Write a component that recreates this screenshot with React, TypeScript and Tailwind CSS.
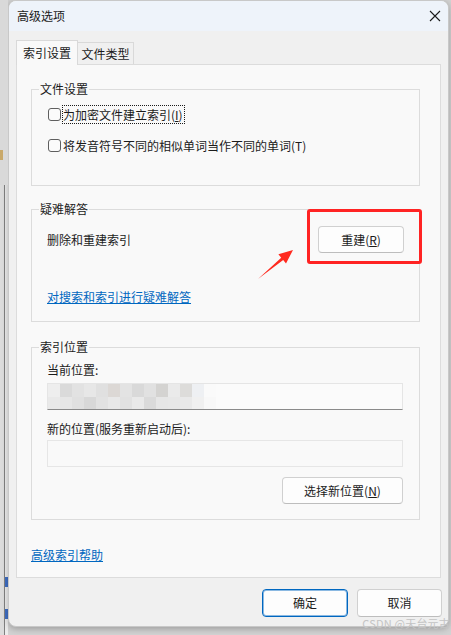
import React from "react";

const font = {
  fontFamily: '"Noto Sans CJK SC", "Noto Sans", "Liberation Sans", sans-serif',
};

const row1 = ["#eeeeee", "#dadada", "#e2e2e2", "#e7e7e7", "#e0e0e0", "#dcd8d5", "#e3e3e3", "#d9d9d9", "#e1e1e1", "#d4d3d1", "#eaeaea", "#dddcda", "#eef0f3", "#fafafa"];
const row2 = ["#e9e9e9", "#e6e6e6", "#e0e0e0", "#d8d8d8", "#e2e2e2", "#e8e8e8", "#e1e1e1", "#e9e9e9", "#dadada", "#e6e6e6", "#e7e7e7", "#e9e9e9", "#f0f0f0", "#f8f8f8"];

function Checkbox() {
  return (
    <span className="w-[13px] h-[13px] rounded-[3px] border border-[#5f5f5f] bg-[#fbfbfb] shrink-0" />
  );
}

function Btn({ children, className = "" }: { children: React.ReactNode; className?: string }) {
  return (
    <div
      className={
        "h-[27px] flex items-center justify-center rounded-[4px] border border-[#d0d0d0] border-b-[#bdbdbd] bg-[#fdfdfd] text-[12px] leading-[16px] text-[#1b1b1b] " +
        className
      }
    >
      {children}
    </div>
  );
}

export default function App() {
  return (
    <div
      className="w-[451px] h-[635px] bg-[#d2d2d2] flex relative overflow-hidden text-[#1b1b1b]"
      style={font}
    >
      {/* background window strip */}
      <div className="w-[8px] h-full flex flex-col shrink-0">
        <div className="h-[185px] bg-[#d9d9d9] relative">
          <span className="absolute left-[0px] top-[150px] w-[3px] h-[10px] bg-[#c9a96b]" />
        </div>
        <div className="flex-1 bg-[#e6e6e6] flex">
          <div className="w-[4px] bg-[#dcdcdc]" />
          <div className="w-[1px] bg-[#808080]" />
          <div className="flex-1 bg-[#ececec] flex flex-col">
            <div className="h-[392px]" />
            <div className="h-[10px] w-[3px] bg-[#3f6fc4]" />
            <div className="h-[22px]" />
            <div className="h-[10px] w-[3px] bg-[#3f6fc4]" />
          </div>
        </div>
      </div>

      {/* dialog */}
      <div className="w-[441px] h-[627px] rounded-[8px] bg-[#f0f0f0] flex flex-col overflow-hidden shadow-[0_2px_6px_rgba(0,0,0,0.25)] border border-[#c8c8c8] shrink-0">
        {/* title bar */}
        <div className="h-[30px] bg-[#eef3fa] flex items-center justify-between pl-[8px] pr-[6px] shrink-0">
          <span className="text-[12px] leading-[16px] text-[#1b1b1b]">高级选项</span>
          <svg width="12" height="12" viewBox="0 0 12 12" className="mr-[1px]">
            <path d="M1 1 L11 11 M11 1 L1 11" stroke="#1b1b1b" strokeWidth="1.1" />
          </svg>
        </div>

        {/* body */}
        <div className="flex flex-col pt-[9px] pl-[7px]">
          {/* tabs */}
          <div className="flex items-end h-[24px]">
            <div className="w-[62px] h-[25px] bg-[#f9f9f9] border border-[#d9d9d9] border-b-0 flex items-center justify-center text-[12px] leading-[16px] relative z-10 -mb-[1px]">
              索引设置
            </div>
            <div className="w-[56px] h-[22px] bg-[#f0f0f0] border border-[#d9d9d9] border-l-0 border-b-0 flex items-center justify-center text-[12px] leading-[16px]">
              文件类型
            </div>
          </div>

          {/* panel */}
          <div className="w-[425px] h-[514px] bg-[#f9f9f9] border border-[#dcdcdc] flex flex-col pl-[14px] pt-[16px]">
            {/* 文件设置 */}
            <fieldset className="w-[389px] h-[105px] border border-[#dcdcdc] flex flex-col">
              <legend className="ml-[7px] px-[1px] text-[12px] leading-[16px]">文件设置</legend>
              <div className="flex items-center gap-[1px] pl-[16px] mt-[7px] h-[20px]">
                <Checkbox />
                <span className="border border-dotted border-[#1b1b1b] text-[12px] leading-[17px] pr-[1px]">
                  为加密文件建立索引(<span className="underline">I</span>)
                </span>
              </div>
              <div className="flex items-center gap-[1px] pl-[16px] mt-[11px] h-[20px]">
                <Checkbox />
                <span className="border border-transparent text-[12px] leading-[17px]">
                  将发音符号不同的相似单词当作不同的单词(T)
                </span>
              </div>
            </fieldset>

            {/* 疑难解答 */}
            <fieldset className="w-[389px] h-[121px] mt-[15px] border border-[#dcdcdc] flex flex-col">
              <legend className="ml-[7px] px-[1px] text-[12px] leading-[16px]">疑难解答</legend>
              <div className="flex items-center justify-between pl-[15px] pr-[15px] mt-[9px]">
                <span className="text-[12px] leading-[16px]">删除和重建索引</span>
                <Btn className="w-[86px]">
                  重建(<span className="underline">R</span>)
                </Btn>
              </div>
              <span className="ml-[15px] mt-[36px] text-[12px] leading-[16px] text-[#0067c0] underline self-start">
                对搜索和索引进行疑难解答
              </span>
            </fieldset>

            {/* 索引位置 */}
            <fieldset className="w-[389px] h-[181px] mt-[17px] border border-[#dcdcdc] flex flex-col pl-[15px]">
              <legend className="ml-[-8px] px-[1px] text-[12px] leading-[16px]">索引位置</legend>
              <span className="mt-[7px] text-[12px] leading-[16px]">当前位置:</span>
              <div className="mt-[5px] w-[356px] h-[27px] bg-[#fbfbfb] border border-[#e5e5e5] border-b-[#8a8a8a] flex items-stretch overflow-hidden">
                <div className="flex flex-col w-[168px]">
                  <div className="flex h-[13px]">
                    {row1.map((c, i) => (
                      <div key={i} className="w-[12px] h-full" style={{ backgroundColor: c }} />
                    ))}
                  </div>
                  <div className="flex h-[13px]">
                    {row2.map((c, i) => (
                      <div key={i} className="w-[12px] h-full" style={{ backgroundColor: c }} />
                    ))}
                  </div>
                </div>
              </div>
              <span className="mt-[11px] text-[12px] leading-[16px]">新的位置(服务重新启动后):</span>
              <div className="mt-[3px] w-[356px] h-[27px] bg-[#f9f9f9] border border-[#e6e6e6]" />
              <div className="mt-[10px] w-[356px] flex justify-end">
                <Btn className="w-[121px]">
                  选择新位置(<span className="underline">N</span>)
                </Btn>
              </div>
            </fieldset>

            <span className="mt-[27px] text-[12px] leading-[16px] text-[#0067c0] underline self-start">
              高级索引帮助
            </span>
          </div>

          {/* footer */}
          <div className="flex justify-end gap-[9px] mt-[11px] pr-[6px]">
            <div className="w-[86px] h-[28px] flex items-center justify-center rounded-[4px] border border-[#0067c0] shadow-[inset_0_0_0_1px_rgba(0,103,192,0.45)] bg-[#fdfdfd] text-[12px] leading-[16px]">
              确定
            </div>
            <div className="w-[85px] h-[28px] flex items-center justify-center rounded-[4px] border border-[#d0d0d0] border-b-[#bdbdbd] bg-[#fdfdfd] text-[12px] leading-[16px]">
              取消
            </div>
          </div>
        </div>
      </div>

      {/* red highlight rectangle */}
      <div className="absolute left-[307px] top-[209px] w-[115px] h-[55px] border-[3px] border-[#ff2323] rounded-[3px]" />

      {/* red arrow */}
      <svg className="absolute left-[255px] top-[246px]" width="42" height="36" viewBox="0 0 42 36">
        <polygon
          points="38,4 31,17.5 28.2,14 3,33 26.2,11.7 23.4,8.3"
          fill="#ff2a1f"
        />
      </svg>

      {/* watermark */}
      <span className="absolute right-[1px] bottom-[5px] text-[11px] leading-[13px] text-[#c4c4c4] tracking-[0.2px]">
        CSDN @天台元古
      </span>
    </div>
  );
}
